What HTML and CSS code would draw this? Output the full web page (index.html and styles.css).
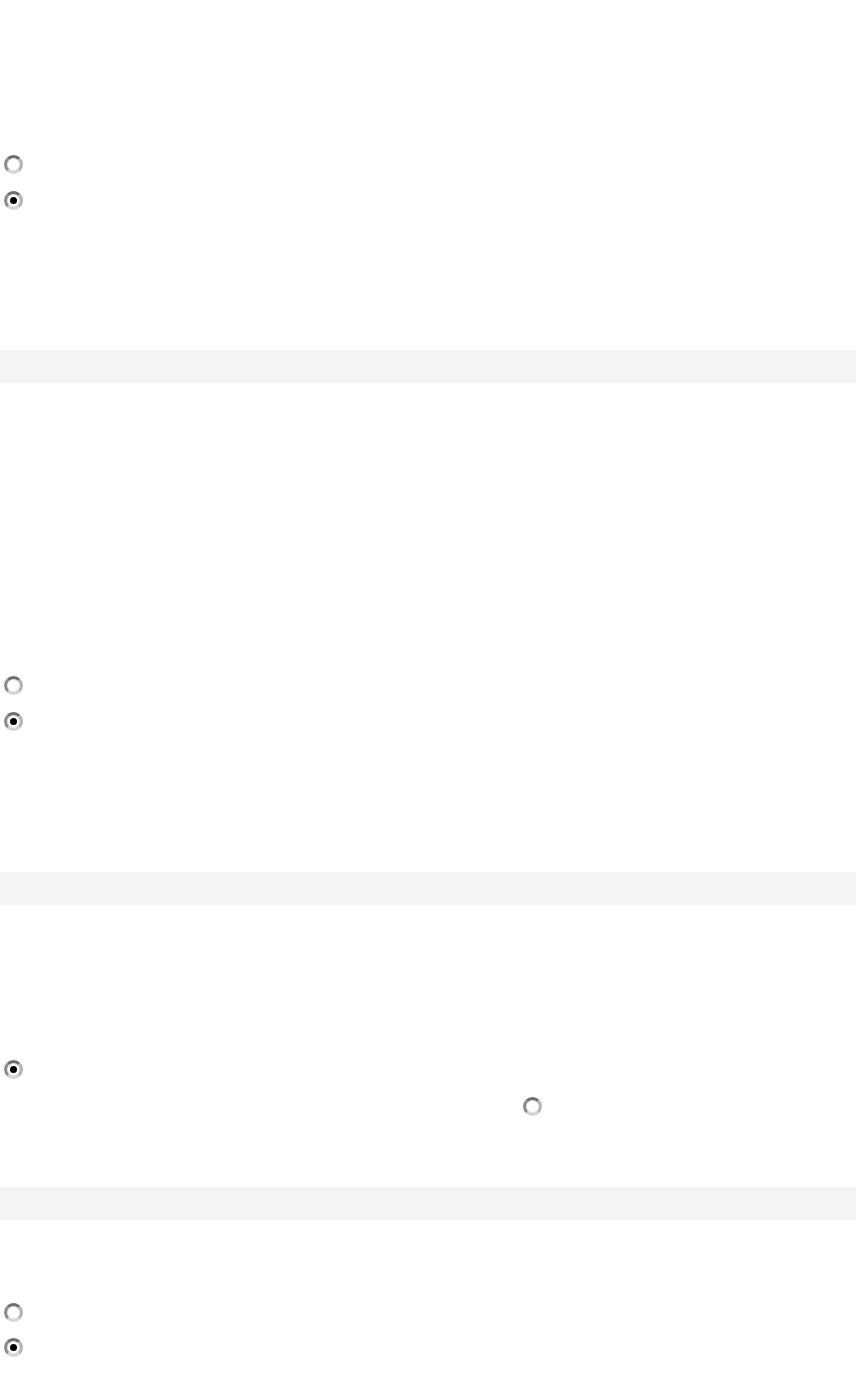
FILE: index.html
```html
<!DOCTYPE html>
<html lang="en">
<head>
<meta charset="utf-8">
<title>Options</title>
<link rel="stylesheet" href="styles.css">
</head>
<body>
<main class="page">
  <section class="group group-1">
    <div class="choices">
      <label class="choice"><input type="radio" name="q1" class="radio"></label>
      <label class="choice"><input type="radio" name="q1" class="radio" checked></label>
    </div>
  </section>
  <div class="band"></div>
  <section class="group group-2">
    <div class="choices">
      <label class="choice"><input type="radio" name="q2" class="radio"></label>
      <label class="choice"><input type="radio" name="q2" class="radio" checked></label>
    </div>
  </section>
  <div class="band"></div>
  <section class="group group-3">
    <div class="choices">
      <label class="choice"><input type="radio" name="q3" class="radio" checked></label>
      <label class="choice choice-offset"><input type="radio" name="q3b" class="radio"></label>
    </div>
  </section>
  <div class="band"></div>
  <section class="group group-4">
    <div class="choices">
      <label class="choice"><input type="radio" name="q4" class="radio"></label>
      <label class="choice"><input type="radio" name="q4" class="radio" checked></label>
    </div>
  </section>
</main>
</body>
</html>
```
FILE: styles.css
```css
html, body {
  margin: 0;
  padding: 0;
  background: #ffffff;
  font-family: "Liberation Sans", Arial, sans-serif;
}

.page {
  display: flex;
  flex-direction: column;
}

.group {
  display: flex;
  flex-direction: column;
}

.group-1 { padding: 155px 0 140px; }
.group-2 { padding: 293px 0 141px; }
.group-3 { padding: 155px 0 71px; }
.group-4 { padding: 83px 0 38px; }

.choices {
  display: flex;
  flex-direction: column;
  gap: 17px;
}

.group-3 .choices { gap: 18px; }
.group-4 .choices { gap: 16px; }

.choice {
  display: flex;
  padding-left: 4px;
}

.choice-offset { padding-left: 523px; }

.band {
  height: 33px;
  background: #f4f4f4;
}

.radio {
  appearance: none;
  -webkit-appearance: none;
  margin: 0;
  width: 19px;
  height: 19px;
  border-radius: 50%;
  box-sizing: border-box;
  border: 3px solid;
  border-color: #6e6e6e #b4b4b4 #d4d4d4 #8c8c8c;
  background: #ffffff;
  box-shadow: inset 0 0 0 1px #e6e6e6;
  display: grid;
  place-items: center;
}

.radio:checked::after {
  content: "";
  width: 7px;
  height: 7px;
  border-radius: 50%;
  background: #000000;
}
```
